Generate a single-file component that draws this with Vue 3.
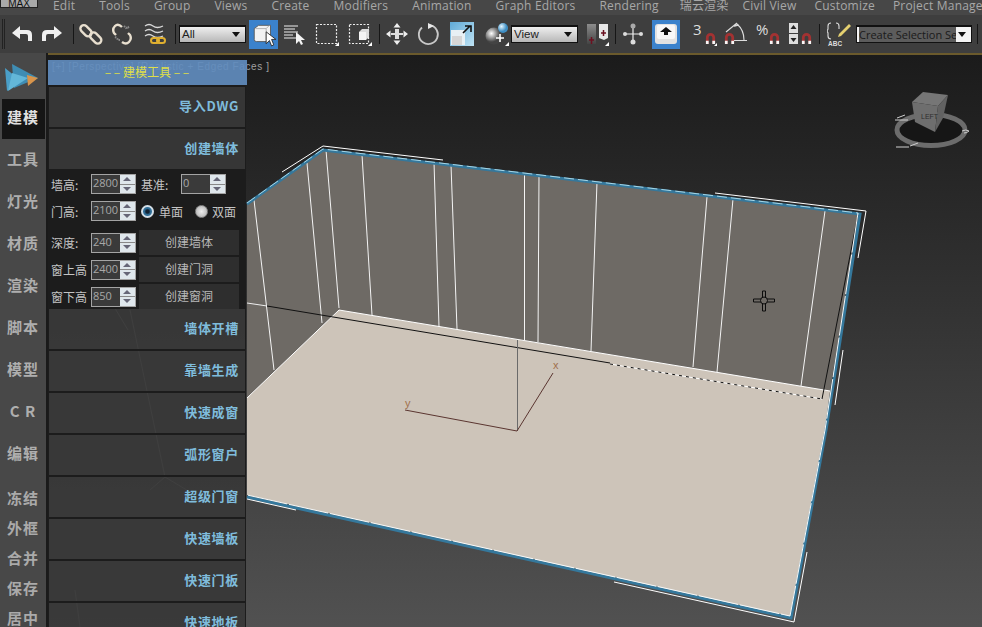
<script setup>
const menus = ['Edit', 'Tools', 'Group', 'Views', 'Create', 'Modifiers', 'Animation', 'Graph Editors', 'Rendering', '瑞云渲染', 'Civil View', 'Customize', 'Project Manage']
const railTop = ['建模', '工具', '灯光', '材质', '渲染', '脚本', '模型', 'C R', '编辑']
const railBottom = ['冻结', '外框', '合并', '保存', '居中']
const rowsTop = ['导入DWG', '创建墙体']
const rowsBottom = ['墙体开槽', '靠墙生成', '快速成窗', '弧形窗户', '超级门窗', '快速墙板', '快速门板', '快速地板']

// verticals on the walls, page coordinates
const wallLines = [
  [254, 200, 274, 370], [307, 163, 322, 323], [326, 150, 339, 308], [362, 155, 372, 315],
  [434, 162, 439, 327], [451, 165, 457, 329], [524.5, 173, 524.5, 340], [539, 175, 538, 342],
  [597, 182, 591, 351], [707, 197, 693, 367], [733, 199, 717, 372], [825, 211, 801, 386]
]
const outerLines = [
  '282,172 323,146 443,160', '715,193 866,211 858,258', '843,350 835,405',
  '807,552 794,622 614,582', '247,499 296,510'
]
const ghostLines = ['130,310 165,477 190,492', '165,477 150,490', '75,590 80,627', '110,300 128,330']
</script>

<template>
  <div class="app">
    <div class="menubar">
      <div class="maxbtn">MAX</div>
      <span v-for="m in menus" :key="m" class="menu">{{ m }}</span>
    </div>

    <div class="toolbar">
      <svg width="0" height="0" class="defs">
        <symbol id="magnet" viewBox="0 0 12 14">
          <path d="M1 13V6a5 5 0 0 1 10 0v7H8V6a2 2 0 0 0-4 0v7z" fill="#a33232" />
          <path d="M1 9.500h3V13H1zM8 9.500h3V13H8z" fill="#f6f6f6" />
        </symbol>
      </svg>
      <div class="grip"></div>

      <svg class="ic ml5" viewBox="0 0 24 24"><path d="M2 11l8-7v4h7q5 0 5 5v6h-4v-5q0-2-2-2h-6v5z" fill="#f0f0f0" /></svg>
      <svg class="ic ml6" viewBox="0 0 24 24"><path d="M22 11l-8-7v4H7q-5 0-5 5v6h4v-5q0-2 2-2h6v5z" fill="#f0f0f0" /></svg>
      <div class="sep ml9"></div>

      <svg class="ic ml5" viewBox="0 0 24 24">
        <rect x="1" y="5" width="13" height="7" rx="3.5" transform="rotate(45 7 8)" fill="none" stroke="#e8dfcf" stroke-width="2.4" />
        <rect x="10" y="12" width="13" height="7" rx="3.5" transform="rotate(45 16 16)" fill="none" stroke="#e8dfcf" stroke-width="2.4" />
      </svg>
      <svg class="ic ml7" viewBox="0 0 24 24">
        <path d="M12 5Q8 1 5 4T4 11l2 2M12 20q4 3 7 0t1-7l-2-2" fill="none" stroke="#e8dfcf" stroke-width="2.4" />
        <path d="M14 4l2 2 2-1 1 2M5 15l2 1 1 2 2 0" fill="none" stroke="#888" stroke-width="2" stroke-dasharray="1.5 1" />
      </svg>
      <svg class="ic ml9" viewBox="0 0 24 24">
        <path d="M2 4q4-3 8 0t10 0M2 9q4-3 8 0t10 0M2 14q4-3 8 0t10 0" fill="none" stroke="#d8d8d8" stroke-width="1.3" />
        <rect x="8" y="16" width="8" height="5" rx="2.5" fill="none" stroke="#e0b030" stroke-width="2" />
        <rect x="14" y="16" width="8" height="5" rx="2.5" fill="none" stroke="#e0b030" stroke-width="2" />
      </svg>
      <div class="sep ml8"></div>

      <div class="combo ml3 w67"><span>All</span><i class="caret"></i></div>

      <div class="active ml3">
        <svg viewBox="0 0 24 24" width="26" height="26">
          <path d="M3 7l4-3h11v12l-3 3H5q-2 0-2-2z" fill="#f2f2f2" stroke="#555" stroke-width=".8" />
          <path d="M4 7h10l3-3M14 7v11" fill="none" stroke="#aaa" stroke-width=".8" />
          <path d="M14 10v11l3-3 2 5 2-1-2-5h4z" fill="#fff" stroke="#222" stroke-width=".8" />
        </svg>
      </div>

      <svg class="ic ml5" viewBox="0 0 24 24">
        <path d="M1 4h14M1 7h11M1 10h14M1 13h9M1 16h12" stroke="#eee" stroke-width="1.2" />
        <path d="M13 10v12l3-3 2 4 2-1-2-4h4z" fill="#f4f4f4" />
      </svg>
      <svg class="ic ml8" viewBox="0 0 24 24">
        <rect x="1.5" y="2.5" width="20" height="19" fill="none" stroke="#eee" stroke-width="1.2" stroke-dasharray="2 1.5" />
        <path d="M20 24l4-4v4z" fill="#fff" />
      </svg>
      <svg class="ic ml9" viewBox="0 0 24 24">
        <rect x="1.5" y="2.5" width="19" height="19" fill="none" stroke="#eee" stroke-width="1.2" stroke-dasharray="2 1.5" />
        <path d="M11 10l3-3h7v8l-3 3h-7z" fill="#ddd" /><path d="M11 10h7v8h-7z" fill="#f4f4f4" />
        <path d="M20 24l4-4v4z" fill="#fff" />
      </svg>
      <div class="sep ml7"></div>

      <svg class="ic ml5" viewBox="0 0 24 24">
        <path d="M12 1l3.5 4.5h-7zM12 23l3.5-4.5h-7zM1 12l4.5-3.5v7zM23 12l-4.5-3.5v7z" fill="#eee" />
        <path d="M6 11h4V7h4v4h4v2h-4v4h-4v-4H6z" fill="#ddd" />
      </svg>
      <svg class="ic ml8" viewBox="0 0 24 24">
        <path d="M13 3.2A9.5 9.5 0 1 1 5 5.5" fill="none" stroke="#c8c8c8" stroke-width="1.8" />
        <path d="M11 1l6 3-6 3z" fill="#e8e8e8" />
      </svg>
      <div class="scale ml9">
        <svg viewBox="0 0 24 24" width="24" height="24">
          <rect x="1" y="8" width="14" height="15" fill="#e8f0f4" />
          <rect x="2" y="14" width="10" height="9" fill="#d6d6d6" />
          <path d="M13 11l7-7M15 4h6v6" fill="none" stroke="#111" stroke-width="1.6" />
        </svg>
      </div>
      <svg class="ic ml11" viewBox="0 0 24 24">
        <defs>
          <radialGradient id="ball" cx=".35" cy=".35"><stop offset="0" stop-color="#fff" /><stop offset="1" stop-color="#444" /></radialGradient>
          <radialGradient id="blueball" cx=".35" cy=".35"><stop offset="0" stop-color="#e4f6ff" /><stop offset="1" stop-color="#3f8fc4" /></radialGradient>
        </defs>
        <circle cx="9" cy="14" r="8.5" fill="url(#ball)" />
        <circle cx="18" cy="6" r="5" fill="url(#blueball)" />
        <path d="M15 12v8M11 16h8" stroke="#fff" stroke-width="1.6" />
        <path d="M20 24l4-4v4z" fill="#fff" />
      </svg>
      <div class="combo ml2 w67"><span>View</span><i class="caret"></i></div>

      <svg class="ic ml7" viewBox="0 0 24 24">
        <defs><linearGradient id="mirr" x1="0" y1="0" x2="0" y2="1"><stop offset="0" stop-color="#8c8c8c" /><stop offset="1" stop-color="#444" /></linearGradient></defs>
        <rect x="2" y="2" width="9" height="20" fill="url(#mirr)" />
        <path d="M14 2h9v14l-4 2-5-2z" fill="#e8e8e8" />
        <path d="M6.500 15v7M4 18h5M18.500 8v6M16 11h5" stroke="#6b1020" stroke-width="1.5" />
        <path d="M20 24l4-4v4z" fill="#fff" />
      </svg>
      <div class="sep ml6"></div>
      <svg class="ic ml5" viewBox="0 0 24 24">
        <path d="M12 4v16M4 12h16" stroke="#eee" stroke-width="1.2" />
        <circle cx="12" cy="4" r="2.500" fill="#aaa" /><circle cx="12" cy="20" r="2.500" fill="#ddd" />
        <circle cx="4" cy="12" r="2" fill="#ddd" /><circle cx="20" cy="12" r="2" fill="#ddd" />
      </svg>
      <div class="active kbd ml7">
        <svg viewBox="0 0 24 24" width="24" height="24">
          <rect x="1" y="2" width="22" height="20" rx="3" fill="#e2e2e2" />
          <rect x="3" y="3" width="18" height="14" rx="2" fill="#f8f8f8" />
          <path d="M12 5l6 5h-4v3h-4v-3H6z" fill="#111" />
        </svg>
      </div>

      <svg class="ic ml13" viewBox="0 0 24 24">
        <text x="0" y="13" class="snapnum">3</text>
        <use href="#magnet" x="12" y="10" width="11" height="13" />
        <path d="M21 24l3-3v3z" fill="#fff" />
      </svg>
      <svg class="ic ml7" viewBox="0 0 24 24">
        <use href="#magnet" x="0" y="10" width="11" height="13" />
        <path d="M2 10L13 1M13 2q7 6 7 16M10 18.500h13M15 3l-4 1 2-3" fill="none" stroke="#ddd" stroke-width="1.1" />
      </svg>
      <svg class="ic ml8" viewBox="0 0 24 24">
        <text x="0" y="13" class="snapnum">%</text>
        <use href="#magnet" x="13" y="10" width="11" height="13" />
      </svg>
      <svg class="ic ml9" viewBox="0 0 24 24">
        <rect x="0" y="1" width="9" height="10" fill="#ddd" /><rect x="0" y="12" width="9" height="10" fill="#ddd" />
        <path d="M4.500 3l3 4h-6zM4.500 20l-3-4h6z" fill="#222" />
        <use href="#magnet" x="12" y="10" width="11" height="13" />
      </svg>
      <div class="sep ml6"></div>
      <svg class="ic ml7" viewBox="0 0 24 24">
        <path d="M4 1Q1 1 1 4v3L0 9l1 2v3q0 3 3 3M9 1q3 0 3 3v3" fill="none" stroke="#ddd" stroke-width="1.1" />
        <path d="M22 2l2 2-10 10-3 1 1-3z" fill="#e4d070" />
        <text x="1" y="24" class="abc">ABC</text>
      </svg>

      <div class="combo set ml5"><span>Create Selection Set</span><i class="caret"></i></div>
      <div class="sep ml5"></div>
    </div>

    <div class="main">
      <aside class="rail">
        <svg class="logo" viewBox="0 0 46 46" width="46" height="46">
          <path d="M5 15l16 13-14 10z" fill="#4a9fc8" />
          <path d="M12 11l26 14-24 10z" fill="#3f8db3" />
          <path d="M12 20l16 5-20 13z" fill="#63b7d8" />
          <path d="M27 22l11 3-10 8z" fill="#d8954c" />
        </svg>
        <div v-for="(r, i) in railTop" :key="r" class="railitem" :class="{ on: i === 0 }">{{ r }}</div>
        <div class="railbottom">
          <div v-for="r in railBottom" :key="r" class="railsmall">{{ r }}</div>
        </div>
      </aside>

      <div class="viewport">
        <svg class="scene" viewBox="48 55 934 572" width="934" height="572">
          <polyline v-for="(g, i) in ghostLines" :key="i" :points="g" fill="none" stroke="#9a9a9a" stroke-width="1" />
          <polygon points="247,203 323,149 859,213 830,391 339,310 247,398" fill="#6e6a65" />
          <polygon points="247,398 339,310 830,391 825,430 790,617 247,495" fill="#cdc4b9" />
          <line v-for="(l, i) in wallLines" :key="'w' + i" :x1="l[0]" :y1="l[1]" :x2="l[2]" :y2="l[3]" stroke="#f4f4f4" stroke-width="1" />
          <path d="M247 398L339 310L830 391" fill="none" stroke="#fff" stroke-width="1" />

          <path d="M247 303L267 306" stroke="#eee" stroke-width="1" />
          <path d="M267 306L610 363" stroke="#111" stroke-width="1" />
          <path d="M610 364L822 399" stroke="#fff" stroke-width="1" />
          <path d="M610 364L822 399" stroke="#111" stroke-width="1" stroke-dasharray="3 4" />
          <path d="M858 215L822 399" stroke="#111" stroke-width="1" />
          <path d="M517.5 340V431" stroke="#6a6a6a" stroke-width="1" />
          <path d="M405 410L517 431L553 373" fill="none" stroke="#5a3530" stroke-width="1" />
          <text x="553" y="369" class="axis">x</text>
          <text x="405" y="407" class="axis">y</text>

          <!-- selection edges: blue tube with a bright line on the floor side -->
          <polyline points="247,204 323,150 860,214 826,430 791,618 247,497" fill="none" stroke="#35789c" stroke-width="3" />
          <polyline points="247,203 323,149 858,213" fill="none" stroke="#a6d6e6" stroke-width="1" stroke-dasharray="10 4" />
          <polyline points="858,213 825,430 790,616 247,495" fill="none" stroke="#f6fafb" stroke-width="1" stroke-dasharray="40 2" />
          <polyline v-for="(o, i) in outerLines" :key="'o' + i" :points="o" fill="none" stroke="#fff" stroke-width="1" />

          <g fill="#6f6b66" stroke="#0c0c0c" stroke-width="1">
            <path d="M762.500 291h3v8h9v3h-9v9h-3v-9h-9v-3h9z" />
            <circle cx="764" cy="300.500" r="3.500" />
          </g>

          <g>
            <ellipse cx="931" cy="130" rx="34" ry="15.500" fill="#161616" stroke="#6c6c6c" stroke-width="5" />
            <path d="M912 102l11-10 25 3-10 11z" fill="#767676" />
            <path d="M912 102l26 4-3 26-20-10z" fill="#6e6e6e" />
            <path d="M938 106l10-11-5 23-8 14z" fill="#626262" />
            <text x="921" y="119" class="cube">LEFT</text>
            <path d="M895 120h13M897 118l8-3M909 147h-13M918 143l-8 3" stroke="#cfcfcf" stroke-width="1" />
            <path d="M962 131q4-2 7 0-2 2-5 2" fill="none" stroke="#cfcfcf" stroke-width="1" />
          </g>
        </svg>

        <div class="label">[+] [Perspective] [Realistic + Edged Faces ]</div>

        <div class="panel">
          <div class="ptitle">– – 建模工具 – –</div>
          <div class="pbody">
            <div v-for="r in rowsTop" :key="r" class="prow">{{ r }}</div>

            <div class="form">
              <div class="frow">
                <span class="flabel">墙高:</span>
                <div class="spin"><span class="val">2800</span><div class="step"><b class="up"></b><b class="down"></b></div></div>
                <span class="flabel base">基准:</span>
                <div class="spin"><span class="val">0</span><div class="step"><b class="up"></b><b class="down"></b></div></div>
              </div>
              <div class="frow r2">
                <span class="flabel">门高:</span>
                <div class="spin"><span class="val">2100</span><div class="step"><b class="up"></b><b class="down"></b></div></div>
                <span class="radio sel"></span><span class="rtext">单面</span>
                <span class="radio second"></span><span class="rtext">双面</span>
              </div>
              <div class="frow r3">
                <span class="flabel">深度:</span>
                <div class="spin"><span class="val">240</span><div class="step"><b class="up"></b><b class="down"></b></div></div>
                <div class="fbtn">创建墙体</div>
              </div>
              <div class="frow r4">
                <span class="flabel">窗上高</span>
                <div class="spin"><span class="val">2400</span><div class="step"><b class="up"></b><b class="down"></b></div></div>
                <div class="fbtn">创建门洞</div>
              </div>
              <div class="frow r4">
                <span class="flabel">窗下高</span>
                <div class="spin"><span class="val">850</span><div class="step"><b class="up"></b><b class="down"></b></div></div>
                <div class="fbtn">创建窗洞</div>
              </div>
            </div>

            <div v-for="r in rowsBottom" :key="r" class="prow">{{ r }}</div>
          </div>
        </div>
      </div>
    </div>
  </div>
</template>

<style>
html, body { margin: 0; background: #333; }
</style>

<style scoped>
.app {
  width: 982px;
  height: 627px;
  overflow: hidden;
  display: flex;
  flex-direction: column;
  font-family: "Open Sans", "Noto Sans CJK SC", sans-serif;
}
.menubar {
  height: 15px;
  flex: none;
  display: flex;
  background: #474747;
  color: #a8a8a8;
  font-size: 12px;
  line-height: 11px;
  overflow: hidden;
  white-space: nowrap;
}
.maxbtn {
  width: 38px;
  height: 8px;
  flex: none;
  margin-right: 15px;
  background: #a9a9a9;
  border: 1px solid #222;
  border-top: 0;
  box-sizing: border-box;
  color: #111;
  font: 10px/8px "Liberation Sans", sans-serif;
  text-align: center;
}
.menu { flex: none; margin-right: 24px; letter-spacing: .2px; }
.menu:nth-child(10) { margin-right: 21px; }
.menu:nth-child(11) { margin-right: 14px; }
.menu:nth-child(12), .menu:nth-child(13) { margin-right: 18px; }

.toolbar {
  height: 38px;
  flex: none;
  display: flex;
  align-items: center;
  background: #3e3e3e;
}
.defs { position: absolute; }
.grip { width: 3px; height: 30px; margin-left: 2px; border-left: 1px solid #222; border-right: 1px solid #222; box-sizing: border-box; }
.ic { width: 24px; height: 24px; flex: none; }
.sep { width: 1px; height: 20px; flex: none; background: #161616; }
.ml2 { margin-left: 2px; } .ml3 { margin-left: 3px; } .ml4 { margin-left: 4px; }
.ml5 { margin-left: 5px; } .ml6 { margin-left: 6px; } .ml7 { margin-left: 7px; }
.ml8 { margin-left: 8px; } .ml9 { margin-left: 9px; } .ml11 { margin-left: 11px; }
.ml13 { margin-left: 13px; }

.combo {
  height: 18px;
  flex: none;
  box-sizing: border-box;
  border: 2px solid #111;
  border-width: 2px 1px 1px 1px;
  background: linear-gradient(#eee, #b8b8b8);
  color: #222;
  font: 11.5px/15px "Liberation Sans", sans-serif;
  padding-left: 2px;
  position: relative;
  overflow: hidden;
}
.w67 { width: 67px; }
.caret {
  position: absolute;
  right: 5px;
  top: 5px;
  border: 4px solid transparent;
  border-top: 5px solid #111;
  border-bottom: 0;
}
.set { width: 116px; background: #f4f4f4; color: #1a1a1a; font-family: "Open Sans", sans-serif; font-size: 11px; white-space: nowrap; }
.set span { display: block; width: 97px; overflow: hidden; background: #5c5c5c; }

.active {
  width: 29px;
  height: 29px;
  flex: none;
  background: #3b82cc;
  display: flex;
  align-items: center;
  justify-content: center;
}
.kbd { width: 28px; }
.scale {
  width: 24px;
  height: 24px;
  flex: none;
  background: linear-gradient(135deg, #5fa9d6, #bfe3f4);
}
.snapnum { font: 15px "Open Sans", sans-serif; fill: #ddd; }
.abc { font: bold 6.500px "Liberation Sans", sans-serif; fill: #ddd; }

.main { flex: 1; display: flex; min-height: 0; }
.rail {
  width: 46px;
  flex: none;
  background: #484848;
  border-right: 2px solid #1a1a1a;
  display: flex;
  flex-direction: column;
  align-items: center;
  font-family: "Noto Sans CJK SC", sans-serif;
}
.logo { flex: none; }
.railitem {
  width: 43px;
  height: 40px;
  margin-bottom: 2px;
  flex: none;
  box-sizing: border-box;
  padding-bottom: 6px;
  display: flex;
  align-items: center;
  justify-content: center;
  color: #aeaeae;
  font-size: 15px;
  font-weight: 700;
  letter-spacing: 1px;
  white-space: nowrap;
}
.railitem.on { background: #151515; color: #e0e0e0; }
.railbottom { margin-top: 6px; }
.railsmall {
  height: 30px;
  line-height: 30px;
  color: #aaa;
  font-size: 15px;
  font-weight: 700;
  letter-spacing: 1px;
  text-align: center;
}

.viewport {
  flex: 1;
  position: relative;
  overflow: hidden;
  border-top: 2px solid #6b5a2c;
  background: linear-gradient(#1b1b1b, #232323 15%, #515151);
}
.scene { position: absolute; left: 0; top: 0; }
.axis { font: 11px "Liberation Sans", sans-serif; fill: #a0704c; }
.cube { font: 7px "Liberation Sans", sans-serif; fill: #2e2e2e; }
.label {
  position: absolute;
  left: 4px;
  top: 6px;
  color: #a0a0a0;
  font: 10px "Liberation Sans", sans-serif;
  letter-spacing: .6px;
  white-space: nowrap;
}

.panel {
  position: absolute;
  left: -1px;
  top: 5px;
  width: 200px;
  font-family: "Noto Sans CJK SC", sans-serif;
}
.ptitle {
  height: 25px;
  line-height: 23px;
  background: rgba(97, 140, 190, .92);
  color: #dfdf48;
  font-size: 12px;
  text-align: center;
  white-space: pre;
}
.pbody {
  width: 199px;
  border-top: 2px solid #1c1c1c;
}
.prow {
  height: 42px;
  padding: 0 6px 3px 0;
  box-sizing: border-box;
  border: solid #1c1c1c;
  border-width: 0 1px 2px 2px;
  display: flex;
  align-items: center;
  justify-content: flex-end;
  background: rgba(56, 56, 56, .93);
  color: #7fbcdc;
  font-size: 13px;
  font-weight: 700;
  letter-spacing: .7px;
}
.prow:nth-child(2) { height: 40px; border-bottom: 0; }
.form { height: 140px; box-sizing: border-box; padding-top: 5px; background: #1c1c1c; color: #c4c4c4; font-size: 12px; }
.frow { display: flex; align-items: center; height: 20px; padding-left: 4px; }
.r2 { margin-top: 7px; }
.r3 { margin-top: 9px; height: 25px; margin-bottom: 2px; }
.r4 { height: 25px; margin-bottom: 2px; }
.flabel { width: 40px; flex: none; white-space: nowrap; }
.base { margin-left: 5px; }
.spin {
  width: 45px;
  height: 20px;
  flex: none;
  box-sizing: border-box;
  border: 1px solid #a4a4a4;
  background: #3a3a3a;
  display: flex;
  justify-content: space-between;
  color: #a8a8a8;
  font: 11px/16px "Open Sans", sans-serif;
}
.val { padding-left: 1px; }
.step { width: 15px; display: flex; flex-direction: column; gap: 1px; background: #888; }
.step b { flex: 1; background: #dfe7ec; position: relative; }
.step b::after {
  content: "";
  position: absolute;
  left: 3px;
  top: 2px;
  border: 4px solid transparent;
  border-top: 0;
  border-bottom: 4px solid #667;
}
.step .down::after { border-bottom: 0; border-top: 4px solid #667; }
.radio {
  width: 13px;
  height: 13px;
  flex: none;
  margin-left: 5px;
  border-radius: 50%;
  box-sizing: border-box;
  background: radial-gradient(#eee, #aaa);
  border: 1px solid #888;
}
.radio.sel { background: radial-gradient(#123 25%, #2f6e98 50%); border: 2px solid #d4dfe8; }
.radio.second { margin-left: 12px; }
.rtext { margin-left: 5px; color: #c4c4c4; }
.radio.second + .rtext { margin-left: 4px; }
.fbtn {
  width: 100px;
  height: 25px;
  margin-left: 3px;
  line-height: 24px;
  text-align: center;
  background: #2e2e2e;
  color: #b8b8b8;
}
</style>
